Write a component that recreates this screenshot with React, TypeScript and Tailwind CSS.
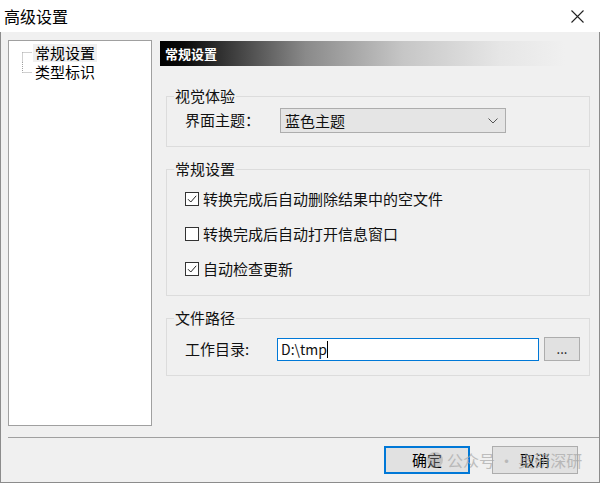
import React from "react";

const font = { fontFamily: '"Noto Sans CJK SC", "Noto Sans", sans-serif' };

const TreeLine = ({ first }: { first: boolean }) => (
  <svg width="24" height="19" className="shrink-0">
    {first ? (
      <>
        <line x1="13.5" y1="9.5" x2="23" y2="9.5" stroke="#a0a0a0" strokeDasharray="1 1" />
        <line x1="13.5" y1="9.5" x2="13.5" y2="19" stroke="#a0a0a0" strokeDasharray="1 1" />
      </>
    ) : (
      <>
        <line x1="13.5" y1="0" x2="13.5" y2="10.5" stroke="#a0a0a0" strokeDasharray="1 1" />
        <line x1="13.5" y1="10.5" x2="23" y2="10.5" stroke="#a0a0a0" strokeDasharray="1 1" />
      </>
    )}
  </svg>
);

const Check = ({ checked, label }: { checked: boolean; label: string }) => (
  <div className="flex items-center h-[20px]">
    <div className="w-[14px] h-[14px] border border-[#333] bg-white flex items-center justify-center">
      {checked && (
        <svg width="12" height="12" viewBox="0 0 12 12">
          <path d="M2 6.2 L4.8 9 L10.2 2.8" fill="none" stroke="#222" strokeWidth="1" />
        </svg>
      )}
    </div>
    <span className="ml-[4px] text-[15px] leading-[20px] text-[#111]">{label}</span>
  </div>
);

const Group = ({ title, className, children }: { title: string; className?: string; children: React.ReactNode }) => (
  <fieldset className={`ml-[6px] w-[424px] border border-[#dcdcdc] ${className ?? ""}`}>
    <legend className="ml-[7px] px-[1px] text-[15px] leading-[16px] text-[#111]">{title}</legend>
    <div className="pl-[18px]">{children}</div>
  </fieldset>
);

export default function App() {
  return (
    <div className="w-[600px] h-[483px] flex flex-col bg-white relative" style={font}>
      {/* title bar */}
      <div className="h-[32px] flex items-center justify-between pl-[4px] pr-[16px] bg-white">
        <span className="text-[16px] text-black leading-[20px]">高级设置</span>
        <svg width="13" height="13" viewBox="0 0 13 13">
          <path d="M0.5 0.5 L12.5 12.5 M12.5 0.5 L0.5 12.5" stroke="#222" strokeWidth="1.1" />
        </svg>
      </div>

      <div className="flex-1 flex flex-col bg-[#f0f0f0] border-l border-r border-b border-[#8c8c8c]">
        <div className="flex pt-[8px]">
          {/* tree */}
          <div className="ml-[7px] w-[144px] h-[386px] bg-white border border-[#a0a0a0] pt-[2px]">
            <div className="flex items-center">
              <TreeLine first />
              <span className="px-[2px] bg-[#f0f0f0] text-[15px] leading-[18px] text-black">常规设置</span>
            </div>
            <div className="flex items-center">
              <TreeLine first={false} />
              <span className="px-[2px] text-[15px] leading-[18px] text-black">类型标识</span>
            </div>
          </div>

          {/* right column */}
          <div className="ml-[8px] flex flex-col">
            <div className="mt-[1px] h-[25px] w-[405px] pl-[5px] flex items-center bg-[linear-gradient(to_right,#000_0%,#0a0a0a_6%,#8a8a8a_36%,#c6c6c6_60%,#e6e6e6_84%,#f0f0f0_100%)]">
              <span className="text-[13px] font-bold text-white leading-[16px]">常规设置</span>
            </div>

            <Group title="视觉体验" className="mt-[22px] pt-[4px] pb-[13px]">
              <div className="flex items-center h-[25px]">
                <span className="w-[95px] text-[15px] text-[#111]">界面主题：</span>
                <div className="w-[226px] h-[25px] bg-[#e5e5e5] border border-[#adadad] flex items-center justify-between pl-[4px] pr-[7px]">
                  <span className="text-[15px] text-[#111] leading-[18px]">蓝色主题</span>
                  <svg width="10" height="6" viewBox="0 0 10 6">
                    <path d="M0.5 0.5 L5 5 L9.5 0.5" fill="none" stroke="#555" strokeWidth="1" />
                  </svg>
                </div>
              </div>
            </Group>

            <Group title="常规设置" className="mt-[14px] pt-[12px] pb-[16px]">
              <div className="flex flex-col gap-[15px]">
                <Check checked label="转换完成后自动删除结果中的空文件" />
                <Check checked={false} label="转换完成后自动打开信息窗口" />
                <Check checked label="自动检查更新" />
              </div>
            </Group>

            <Group title="文件路径" className="mt-[14px] pt-[11px] pb-[14px]">
              <div className="flex items-center h-[24px]">
                <span className="w-[92px] text-[15px] text-[#111]">工作目录:</span>
                <div className="w-[262px] h-[23px] bg-white border border-[#0078d7] flex items-center pl-[3px]">
                  <span className="text-[14px] text-[#111] leading-[18px]">D:\tmp</span>
                  <span className="w-px h-[17px] bg-black" />
                </div>
                <div className="ml-[5px] w-[36px] h-[24px] bg-[#e1e1e1] border border-[#adadad] flex items-center justify-center">
                  <span className="text-[13px] text-[#111] leading-[10px]">...</span>
                </div>
              </div>
            </Group>
          </div>
        </div>

        <div className="ml-[7px] mt-[11px] h-px bg-[#a0a0a0]" />

        <div className="mt-[8px] flex justify-end gap-[22px] pr-[21px]">
          <div className="w-[86px] h-[28px] bg-[#e1e1e1] border-2 border-[#0078d7] flex items-center justify-center text-[15px] text-black">
            确定
          </div>
          <div className="w-[86px] h-[28px] bg-[#e1e1e1] border border-[#adadad] flex items-center justify-center text-[15px] text-black">
            取消
          </div>
        </div>
      </div>

      {/* watermark */}
      <div className="absolute left-[427px] top-[450px] flex items-center gap-[4px] pointer-events-none opacity-70">
        <div className="w-[16px] h-[16px] rounded-full bg-[#9a9a9a] opacity-60" />
        <span className="text-[16px] leading-[20px] text-[#a8a8a8]">公众号 · 奥研深研</span>
      </div>
    </div>
  );
}
